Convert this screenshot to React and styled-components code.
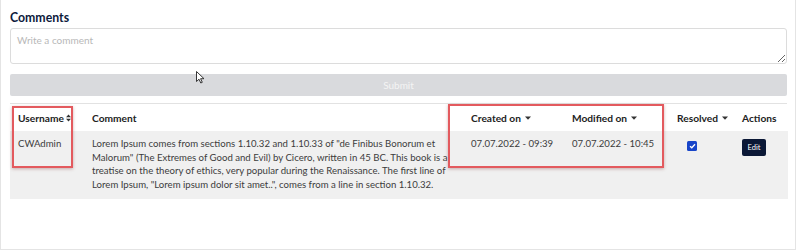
import React from 'react';
import styled, { createGlobalStyle } from 'styled-components';

const GlobalStyle = createGlobalStyle`
  html, body {
    margin: 0;
    padding: 0;
    background: #fff;
  }
  body {
    font-family: Lato, "Noto Sans", sans-serif;
    color: #444;
  }
`;

const Page = styled.div`
  position: relative;
  width: 800px;
  height: 252px;
  overflow: hidden;
`;

const Card = styled.section`
  width: 796px;
  height: 250px;
  box-sizing: border-box;
  border: 1px solid #e4e4e4;
  border-top: none;
  padding: 10px 8px 0 9px;
  display: flex;
  flex-direction: column;
`;

const Title = styled.h2`
  margin: 0;
  font-size: 12.3px;
  line-height: 16px;
  font-weight: 700;
  color: #0d1a3c;
`;

const TextArea = styled.textarea`
  margin-top: 2px;
  height: 36px;
  box-sizing: border-box;
  border: 1px solid #dcdcdc;
  border-radius: 3px;
  padding: 5px 6px;
  font-family: inherit;
  font-size: 10px;
  color: #333;
  resize: vertical;
  outline: none;
  &::placeholder {
    color: #b8b8b8;
  }
`;

const SubmitButton = styled.button`
  margin-top: 10px;
  height: 22px;
  border: none;
  border-radius: 2px;
  background: #d9dadd;
  color: #f4f4f4;
  font-family: inherit;
  font-size: 10px;
  cursor: default;
`;

const Table = styled.div`
  margin-top: 7px;
  border-top: 1px solid #e2e2e2;
  display: grid;
  grid-template-columns: 74px 379px 101px 105px 65px 54px;
`;

const HeadCell = styled.div`
  height: 27px;
  padding-left: 8px;
  display: flex;
  align-items: center;
  gap: ${(p) => p.$gap || 4}px;
  font-size: 10.2px;
  font-weight: 700;
  color: #222;
  white-space: nowrap;
`;

const Cell = styled.div`
  background: #f0f0f0;
  padding: 6px 8px 7px;
  font-size: 9.6px;
  line-height: 13.7px;
  color: #3c3c3c;
  padding-left: ${(p) => p.$indent || 8}px;
  white-space: ${(p) => (p.$wrap ? 'normal' : 'nowrap')};
`;

const CheckBox = styled.span`
  width: 10px;
  height: 10px;
  margin-top: 4px;
  border-radius: 1.5px;
  background: #1845c9;
  display: flex;
  align-items: center;
  justify-content: center;
`;

const EditButton = styled.button`
  margin-top: 2px;
  width: 24px;
  height: 17px;
  padding: 0;
  border: none;
  border-radius: 2px;
  background: #0b1836;
  color: #fff;
  font-family: inherit;
  font-size: 7.5px;
`;

const Marker = styled.div`
  position: absolute;
  left: ${(p) => p.$x}px;
  top: ${(p) => p.$y}px;
  width: ${(p) => p.$w}px;
  height: ${(p) => p.$h}px;
  box-sizing: border-box;
  border: 2px solid #e35a5e;
  box-shadow: 0 1px 3px rgba(120, 40, 40, 0.35);
  pointer-events: none;
`;

const Cursor = styled.svg`
  position: absolute;
  left: 196px;
  top: 71px;
`;

const SortBoth = () => (
  <svg width="5" height="8" viewBox="0 0 5 8">
    <path d="M0 3.3 L2.5 0.5 L5 3.3 Z M0 4.7 L2.5 7.5 L5 4.7 Z" fill="#333" />
  </svg>
);

const Caret = () => (
  <svg width="6" height="4" viewBox="0 0 6 4">
    <path d="M0 0.5 L6 0.5 L3 3.7 Z" fill="#333" />
  </svg>
);

const comment =
  'Lorem Ipsum comes from sections 1.10.32 and 1.10.33 of "de Finibus Bonorum et Malorum" (The Extremes of Good and Evil) by Cicero, written in 45 BC. This book is a treatise on the theory of ethics, very popular during the Renaissance. The first line of Lorem Ipsum, "Lorem ipsum dolor sit amet..", comes from a line in section 1.10.32.';

export default function App() {
  return (
    <Page>
      <GlobalStyle />
      <Card>
        <Title>Comments</Title>
        <TextArea placeholder="Write a comment" />
        <SubmitButton disabled>Submit</SubmitButton>
        <Table>
          <HeadCell $gap={2}>Username <SortBoth /></HeadCell>
          <HeadCell>Comment</HeadCell>
          <HeadCell>Created on <Caret /></HeadCell>
          <HeadCell>Modified on <Caret /></HeadCell>
          <HeadCell>Resolved <Caret /></HeadCell>
          <HeadCell>Actions</HeadCell>

          <Cell>CWAdmin</Cell>
          <Cell $wrap>{comment}</Cell>
          <Cell>07.07.2022 - 09:39</Cell>
          <Cell>07.07.2022 - 10:45</Cell>
          <Cell $indent={18}>
            <CheckBox>
              <svg width="7" height="6" viewBox="0 0 7 6">
                <path d="M1 3.2 L2.8 4.8 L6 1.2" stroke="#fff" strokeWidth="1.3" fill="none" />
              </svg>
            </CheckBox>
          </Cell>
          <Cell>
            <EditButton>Edit</EditButton>
          </Cell>
        </Table>
      </Card>
      <Marker $x={12} $y={106} $w={61} $h={62} />
      <Marker $x={448} $y={104} $w={216} $h={64} />
      <Cursor width="9" height="13" viewBox="0 0 9 13">
        <path d="M0.5 0.5 L0.5 10.5 L3 8.2 L4.8 12 L6.3 11.3 L4.6 7.7 L8 7.7 Z" fill="#fff" stroke="#222" strokeWidth="0.9" />
      </Cursor>
    </Page>
  );
}
